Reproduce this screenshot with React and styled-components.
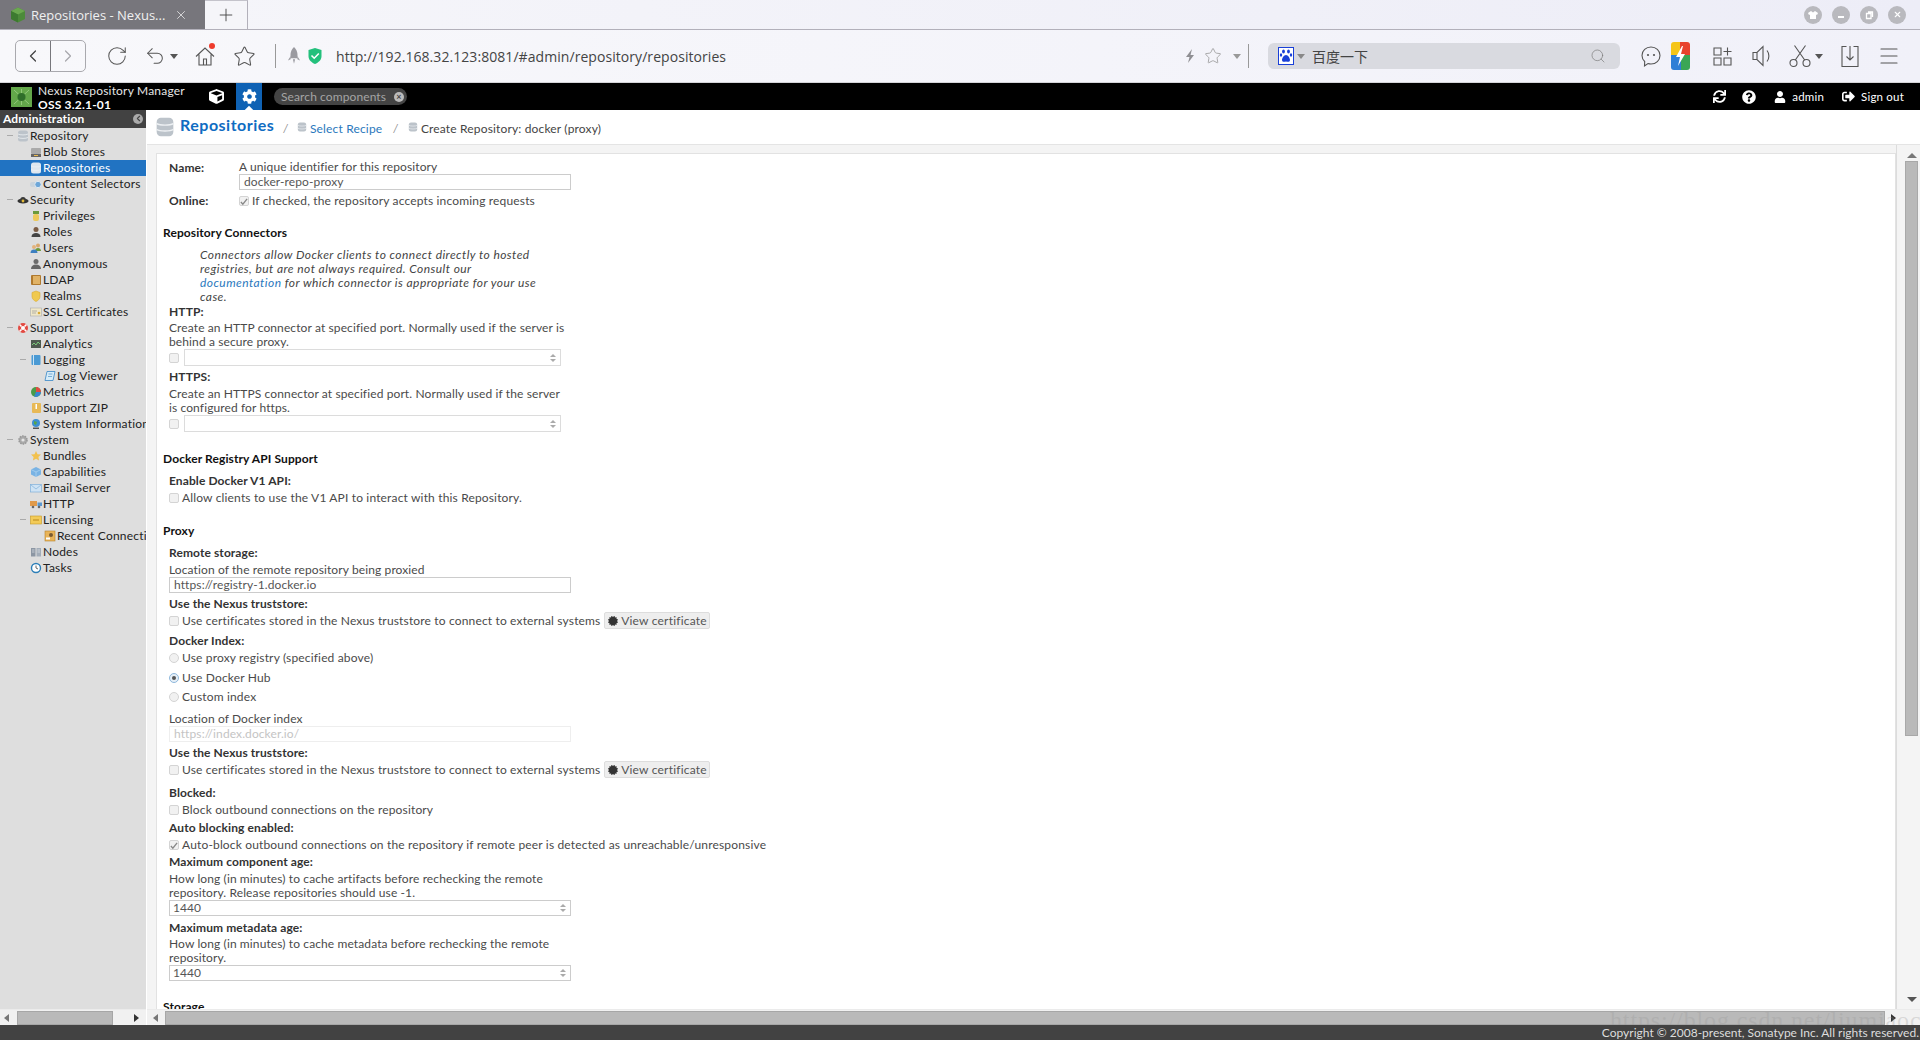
import React from 'react';
import styled, { createGlobalStyle } from 'styled-components';
import { FaCube, FaCog, FaSync, FaQuestionCircle, FaUser, FaSignOutAlt, FaCertificate } from 'react-icons/fa';
import { RotateCw, Undo2, Star, Search, Plus, X, ChevronLeft, ChevronRight, Menu } from 'lucide-react';

const Global = createGlobalStyle`
  html, body { margin: 0; padding: 0; height: 100%; overflow: hidden; background: #fff; }
  * { box-sizing: border-box; }
  body { font-family: Lato, "Open Sans", sans-serif; font-size: 12px; color: #333; }
`;

const Page = styled.div`position: relative; width: 1920px; height: 1040px; display: flex; flex-direction: column; overflow: hidden;`;

/* browser chrome */
const TabBar = styled.div`height: 30px; display: flex; background: linear-gradient(90deg, #f6f6fa, #ededf7); border-bottom: 1px solid #b2b0ba;`;
const ActiveTab = styled.div`width: 205px; height: 29px; background: #77767c; display: flex; align-items: center; padding-left: 10px; color: #f0f0f0; font: 13px "Open Sans", sans-serif;`;
const TabTitle = styled.span`margin-left: 5px; width: 143px; white-space: nowrap;`;
const NewTab = styled.div`width: 43px; height: 29px; display: flex; align-items: center; justify-content: center; background: #f5f5f9; border-right: 1px solid #b2b0ba; border-top: 1px solid #c4c3cb; color: #444;`;
const WindowButtons = styled.div`margin-left: auto; padding-right: 14px; display: flex; gap: 10px; align-items: center;`;
const WinButton = styled.div`width: 18px; height: 18px; border-radius: 50%; background: #b9b9be; display: flex; align-items: center; justify-content: center;`;

const Toolbar = styled.div`height: 53px; display: flex; align-items: center; padding-left: 15px; background: linear-gradient(90deg, #f8f8fb, #f1f1f9); border-bottom: 1px solid #d4d4d8;`;
const NavGroup = styled.div`width: 71px; height: 32px; border: 1px solid #a9a9ae; border-radius: 5px; display: flex; overflow: hidden;`;
const NavButton = styled.div`flex: 1; display: flex; align-items: center; justify-content: center; color: ${p => p.$off ? '#a8a8ac' : '#444'}; & + & { border-left: 1px solid #77777c; }`;
const Slot = styled.div`width: ${p => p.$w}px; margin-left: ${p => p.$ml || 0}px; height: 30px; flex: none; position: relative; display: flex; align-items: center; justify-content: center; color: ${p => p.$c || '#555'};`;
const Caret = styled.div`width: 0; height: 0; border-left: 4px solid transparent; border-right: 4px solid transparent; border-top: 5px solid ${p => p.$c || '#555'};`;
const Divider = styled.div`width: 1px; height: 24px; background: #999; margin-left: ${p => p.$ml}px; flex: none;`;
const Url = styled.div`margin-left: 11px; font: 14px "Open Sans", sans-serif; letter-spacing: .06px; color: #444; white-space: nowrap;`;
const RightTools = styled.div`margin-left: auto; display: flex; align-items: center; padding-right: 16px;`;
const SearchBox = styled.div`width: 352px; height: 26px; margin-left: 19px; border-radius: 6px; background: #d9dae0; display: flex; align-items: center; padding-left: 10px; color: #444; font: 14px "Noto Sans CJK SC", sans-serif;`;
const SearchText = styled.span`margin-left: 7px; width: 278px;`;
const Dot = styled.span`position: absolute; top: 2px; left: 19px; width: 6px; height: 6px; border-radius: 50%; background: #ee3b2d;`;

/* nexus header */
const NexusBar = styled.div`height: 27px; background: #000; display: flex; align-items: center; padding-left: 11px; color: #fff;`;
const Brand = styled.div`width: 150px; margin-left: 6px; height: 27px; overflow: hidden; line-height: 14px; padding-top: 1px; white-space: nowrap; font-size: 12px; letter-spacing: .2px; color: #e6e6e6;`;
const BrandVersion = styled.div`font-weight: 700; color: #fff; margin-top: 0;`;
const BarIcon = styled.div`width: ${p => p.$w}px; margin-left: ${p => p.$ml || 0}px; height: 27px; flex: none; display: flex; align-items: center; justify-content: center; color: #fff;`;
const GearTab = styled(BarIcon)`background: #0f62b4; position: relative; overflow: hidden;
  &::after { content: ""; position: absolute; bottom: -3px; left: 10px; width: 6px; height: 6px; background: #fff; transform: rotate(45deg); }`;
const QuickSearch = styled.div`width: 133px; height: 17px; margin-left: 12px; border-radius: 9px; background: #444; color: #a4a4a4; font-size: 12px; letter-spacing: .1px; display: flex; align-items: center; justify-content: space-between; padding: 0 3px 0 7px;`;
const ClearDot = styled.span`width: 10px; height: 10px; border-radius: 50%; background: #bbb; color: #444; font-size: 9px; line-height: 10px; text-align: center; font-weight: 700;`;
const BarRight = styled.div`margin-left: auto; display: flex; align-items: center; padding-right: 16px; font-size: 11.5px;`;
const BarText = styled.span`margin-left: ${p => p.$ml || 0}px; color: #fff; letter-spacing: .2px;`;

/* body */
const Body = styled.div`flex: 1; min-height: 0; display: flex;`;
const Sidebar = styled.div`width: 146px; flex: none; display: flex; flex-direction: column; background: #dedede;`;
const SideHead = styled.div`height: 18px; background: #424242; color: #fff; font-weight: 700; font-size: 12px; letter-spacing: .15px; display: flex; align-items: center; justify-content: space-between; padding: 0 3px 1px 3px;`;
const Collapse = styled.span`width: 10px; height: 10px; border-radius: 50%; background: #aaa; color: #444; display: flex; align-items: center; justify-content: center;`;
const Tree = styled.div`flex: 1; min-height: 0; overflow: hidden;`;
const Row = styled.div`height: 16px; display: flex; align-items: center; white-space: nowrap; overflow: hidden; padding-left: ${p => p.$indent}px; padding-bottom: 2px; background: ${p => p.$sel ? '#2173c2' : 'transparent'}; color: ${p => p.$sel ? '#fff' : '#222'}; letter-spacing: .2px;`;
const Toggle = styled.span`width: 6px; height: 1px; background: #aaa; flex: none; margin-right: 5px;`;
const RowIcon = styled.span`width: 12px; height: 12px; flex: none; margin: 2px 1px 0 -1px; display: flex; align-items: center; justify-content: center;`;
const HScroll = styled.div`height: 16px; background: #f1f1f1; display: flex; align-items: center; flex: none; border-top: 1px solid #ebebeb;`;
const Arrow = styled.span`width: 0; height: 0; flex: none; margin-left: ${p => p.$ml || 0}px;
  border-top: 4px solid transparent; border-bottom: 4px solid transparent;
  ${p => p.$left ? 'border-right: 5px solid #777;' : 'border-left: 5px solid #333;'}`;
const Thumb = styled.div`height: 14px; width: ${p => p.$w}px; flex: none; margin-left: ${p => p.$ml || 0}px; background: #b9b9b9; border: 1px solid #a6a6a6;`;

const Main = styled.div`flex: 1; min-width: 0; display: flex; flex-direction: column; margin-left: 1px;`;
const Crumbs = styled.div`height: 35px; flex: none; border-bottom: 1px solid #e4e4e4; display: flex; align-items: center; padding-left: 8px; background: #fff;`;
const CrumbTitle = styled.span`font-size: 16px; font-weight: 700; color: #0f6cc2; margin-left: 5px; position: relative; top: -3px; letter-spacing: .5px;`;
const CrumbSep = styled.span`color: #888; font-style: italic; margin: 0 ${p => p.$r}px 0 ${p => p.$l}px; font-size: 11px;`;
const Crumb = styled.span`color: ${p => p.$link ? '#2a78bd' : '#444'}; margin-left: 3px; font-size: 12px; letter-spacing: .16px; position: relative; top: 1px;`;

const Stage = styled.div`flex: 1; min-height: 0; display: flex;`;
const Gutter = styled.div`flex: 1; min-width: 0; background: #f4f4f4; padding: 8px 0 0 9px;`;
const Panel = styled.div`height: 100%; background: #fff; border: 1px solid #e2e2e2; border-bottom: 0; overflow: hidden; padding: 6px 0 0 6px;`;
const VScroll = styled.div`width: 24px; flex: none; background: #f4f4f4; display: flex; flex-direction: column; align-items: center; border-left: 1px solid #dcdcdc; padding: 8px 0 0 6px;`;
const VArrow = styled.span`width: 0; height: 0; border-left: 5px solid transparent; border-right: 5px solid transparent;
  ${p => p.$up ? 'border-bottom: 5px solid #777;' : 'border-top: 5px solid #555; margin-top: auto; margin-bottom: 7px;'}`;
const VThumb = styled.div`width: 13px; height: 575px; margin-top: 3px; background: #b9b9b9; border: 1px solid #a8a8a8;`;

/* form */
const Section = styled.div`font-weight: 700; color: #111; line-height: 14px; margin-top: ${p => p.$mt}px; letter-spacing: .1px;`;
const Field = styled.div`padding-left: 6px; margin-top: ${p => p.$mt || 0}px;`;
const Label = styled.div`font-weight: 700; color: #333; line-height: 14px; letter-spacing: .1px; margin-top: ${p => p.$mt || 0}px;`;
const Help = styled.div`line-height: 14px; color: #4a4a4a; white-space: nowrap; margin-top: ${p => p.$mt || 0}px; letter-spacing: .11px;`;
const NameGrid = styled.div`display: grid; grid-template-columns: 70px 332px; padding-left: 6px; margin-top: ${p => p.$mt || 0}px;`;
const Italic = styled.div`margin: ${p => p.$mt}px 0 0 37px; line-height: 14px; font-style: italic; color: #444; white-space: nowrap; letter-spacing: .44px;`;
const DocLink = styled.span`color: #2a78bd;`;
const Input = styled.div`height: 16px; width: ${p => p.$w || 402}px; border: 1px solid ${p => p.$off ? '#eee' : '#ccc'}; display: flex; align-items: center; padding-left: 4px; color: ${p => p.$off ? '#c4c4c4' : '#555'}; line-height: 14px; letter-spacing: .1px;`;
const NumberInput = styled.div`height: ${p => p.$h || 16}px; width: ${p => p.$w || 402}px; flex: none; margin-left: ${p => p.$ml || 0}px; border: 1px solid ${p => p.$h ? '#dcdcdc' : '#ccc'}; display: flex; align-items: center; justify-content: space-between; padding: 0 4px 0 3px; color: #555; line-height: 14px;`;
const Spinner = styled.span`display: flex; flex-direction: column; gap: 2px; &::before, &::after { content: ""; width: 0; height: 0; border-left: 3px solid transparent; border-right: 3px solid transparent; } &::before { border-bottom: 3px solid #aaa; } &::after { border-top: 3px solid #aaa; }`;
const CheckRow = styled.div`display: flex; align-items: center; height: 14px; padding-bottom: 2px; color: #4a4a4a; white-space: nowrap; letter-spacing: .16px; margin-top: ${p => p.$mt || 0}px;`;
const Box = styled.span`width: 10px; height: 10px; flex: none; margin: 2px 3px 0 0; border: 1px solid #d4d4d4; border-radius: 2px; background: #f1f1f1; display: flex; align-items: center; justify-content: center;`;
const Radio = styled(Box)`border-radius: 50%; ${p => p.$on && 'border-color: #8fb8dc; background: #e6eff7;'}`;
const RadioDot = styled.span`width: 4px; height: 4px; border-radius: 50%; background: #555;`;
const PortRow = styled.div`display: flex; align-items: center; height: 17px;`;
const PortBox = styled(Box)`margin: 0 5px 0 0;`;
const CertButton = styled.div`height: 17px; width: 106px; margin: 1px 0 0 4px; flex: none; background: #eee; border: 1px solid #ddd; border-radius: 2px; display: flex; align-items: center; justify-content: center; gap: 3px; color: #555; letter-spacing: .2px;`;

const Footer = styled.div`height: 15px; flex: none; background: #424242; color: #ddd; font-size: 12px; text-align: right; padding-right: 1px; line-height: 15px;`;
const Watermark = styled.div`position: absolute; left: 1610px; top: 1007px; height: 18px; overflow: hidden; font: 24px/27px "Liberation Serif", serif; color: rgba(150,150,150,.28); letter-spacing: .87px; white-space: nowrap; pointer-events: none;`;

/* small drawings */
const Svg = ({ s = 12, v = '0 0 12 12', children }) => <svg width={s} height={s} viewBox={v} style={{ display: 'block' }}>{children}</svg>;
const Db = ({ s = 12, c = '#bcc3ca' }) => (
  <Svg s={s}>
    <rect x="1" y=".5" width="10" height="11" rx="2.500" fill={c} />
    <path d="M1 4c2 1.200 8 1.200 10 0M1 7.500c2 1.200 8 1.200 10 0" stroke="#eef1f4" strokeWidth=".8" fill="none" />
  </Svg>
);
const icons = {
  db: <Db />,
  blob: <Svg><rect x="1" y="2" width="10" height="6" rx="1" fill="#aaa" /><rect x="1" y="8" width="10" height="3" fill="#666" /><rect x="4" y="9" width="4" height="1" fill="#e9b94c" /></Svg>,
  dbw: <Db c="#dfe7ef" />,
  sel: <Svg><rect x="0" y="4" width="7" height="5" rx="2" fill="#c9d3dc" /><circle cx="8" cy="6.500" r="3.200" fill="#6da6d8" stroke="#dfe9f2" /></Svg>,
  sec: <Svg><ellipse cx="6" cy="7" rx="5.500" ry="2.500" fill="#333" /><path d="M3 7a3 4 0 0 1 6 0z" fill="#3a3a3a" /><circle cx="6" cy="7" r="1.400" fill="#e0b93a" /></Svg>,
  priv: <Svg><rect x="3" y="1" width="6" height="3" fill="#6a9a3c" /><rect x="3" y="4" width="6" height="7" rx="2" fill="#ecc95a" /></Svg>,
  roles: <Svg><circle cx="6" cy="3.500" r="2.500" fill="#7b5c44" /><path d="M1.500 11c0-3 2-4 4.500-4s4.500 1 4.500 4z" fill="#444" /></Svg>,
  users: <Svg><circle cx="8" cy="3.500" r="2" fill="#d9a76c" /><path d="M5 9c0-2 1.500-3 3-3s3 1 3 3z" fill="#6b9a3a" /><circle cx="4" cy="5" r="2" fill="#e3b37c" /><path d="M.5 11c0-2.500 1.500-3.500 3.500-3.500S7.500 8.500 7.500 11z" fill="#3d7fc0" /></Svg>,
  anon: <Svg><circle cx="6" cy="3.500" r="2.500" fill="#6c6c6c" /><path d="M1 11c0-3 2-4.500 5-4.500s5 1.500 5 4.500z" fill="#666" /></Svg>,
  ldap: <Svg><rect x="1" y="1" width="10" height="10" rx="1" fill="#b07a2f" /><rect x="3" y="2" width="7" height="8" fill="#e1b366" /></Svg>,
  realm: <Svg><path d="M6 1l4 1.500v4C10 9 8 10.500 6 11.500 4 10.500 2 9 2 6.500v-4z" fill="#f0c94e" stroke="#d9a933" strokeWidth=".6" /></Svg>,
  ssl: <Svg><rect x=".5" y="2" width="11" height="8" fill="#efe7c8" stroke="#aaa" strokeWidth=".6" /><path d="M2 5h5M2 7h4" stroke="#999" strokeWidth=".7" /><circle cx="9" cy="7" r="1.300" fill="#d9a933" /></Svg>,
  support: <Svg><circle cx="6" cy="6" r="5" fill="#e24a42" /><circle cx="6" cy="6" r="2" fill="#fff" /><path d="M2.500 2.500l2 2M9.500 2.500l-2 2M2.500 9.500l2-2M9.500 9.500l-2-2" stroke="#fff" strokeWidth="1.600" /></Svg>,
  analytics: <Svg><rect x="1" y="2" width="10" height="8" fill="#4e5a50" /><path d="M2 7l2-2 2 2 2-3 2 2" stroke="#7fd67f" strokeWidth=".9" fill="none" /></Svg>,
  logging: <Svg><rect x="1.500" y="1" width="9" height="10" rx="1" fill="#4a9ad4" /><rect x="3" y="1" width="1" height="10" fill="#cde4f5" /></Svg>,
  log: <Svg><path d="M3 1.500h8L9 10.500H1z" fill="#d7ecf8" stroke="#4a90c9" strokeWidth=".9" /><path d="M4.500 4h4M4 6.500h4" stroke="#4a90c9" strokeWidth=".7" /></Svg>,
  metrics: <Svg><circle cx="6" cy="6" r="5" fill="#4a9b4a" /><path d="M6 6V1a5 5 0 0 1 5 5z" fill="#e24a42" /><path d="M6 6h5a5 5 0 0 1-7 4.500z" fill="#3a86d0" /></Svg>,
  zip: <Svg><rect x="2" y="1" width="9" height="10" rx="1" fill="#e8b956" /><rect x="5.500" y="2" width="1.500" height="5" fill="#fff" /></Svg>,
  info: <Svg><circle cx="6" cy="5" r="4" fill="#3d8fd1" /><path d="M4 3l3 1-1 3-2-1z" fill="#58a648" /><rect x="3" y="9.500" width="6" height="1.500" fill="#555" /></Svg>,
  gear: <Svg><circle cx="6" cy="6" r="4" fill="#aaa" stroke="#999" strokeWidth="1.600" strokeDasharray="1.500 1" /><circle cx="6" cy="6" r="1.600" fill="#e5e5e5" /></Svg>,
  bundle: <Svg><path d="M6 1l1.500 3.200 3.500.4-2.600 2.300.7 3.500L6 8.700 2.900 10.400l.7-3.500L1 4.600l3.500-.4z" fill="#f2c14e" /></Svg>,
  cap: <Svg><path d="M6 1l5 2.500v5L6 11 1 8.500v-5z" fill="#79b3e4" /><path d="M1 3.500L6 6l5-2.500M6 6v5" stroke="#bcdcf4" strokeWidth=".6" fill="none" /></Svg>,
  mail: <Svg><rect x=".5" y="2.500" width="11" height="7.500" fill="#cfe3f4" stroke="#7fb0da" strokeWidth=".7" /><path d="M1 3l5 4 5-4" stroke="#7fb0da" strokeWidth=".7" fill="none" /></Svg>,
  http: <Svg><rect x="0" y="3" width="7" height="5" fill="#e09a4a" /><rect x="7.500" y="4.500" width="4.500" height="3.500" fill="#5a97cf" /><circle cx="3" cy="9" r="1.300" fill="#666" /><circle cx="9" cy="9" r="1.300" fill="#666" /></Svg>,
  lic: <Svg><rect x=".5" y="2" width="11" height="8" fill="#f3cb58" stroke="#c79a25" strokeWidth=".6" /><path d="M3 6h6" stroke="#b8871d" /></Svg>,
  conn: <Svg><rect x="1" y="1" width="10" height="10" fill="#e9b459" stroke="#b9822b" strokeWidth=".6" /><circle cx="7" cy="5" r="2" fill="#7a5a32" /><rect x="2" y="7.500" width="4" height="2" fill="#fff" /></Svg>,
  nodes: <Svg><rect x="1" y="2" width="4.500" height="8.500" fill="#8c96a3" /><rect x="6.500" y="2" width="4.500" height="8.500" fill="#a3adb9" /><path d="M2 4h2.500M2 6h2.500M7.500 4H10M7.500 6H10" stroke="#dfe5ea" strokeWidth=".7" /></Svg>,
  tasks: <Svg><circle cx="6" cy="6" r="4.500" fill="#fff" stroke="#2d7fb8" strokeWidth="1.400" /><path d="M6 3.500V6l2 1" stroke="#555" strokeWidth=".9" fill="none" /></Svg>,
};

const tree = [
  ['Repository', 0, 'db', 1], ['Blob Stores', 1, 'blob'], ['Repositories', 1, 'dbw', 0, 1], ['Content Selectors', 1, 'sel'],
  ['Security', 0, 'sec', 1], ['Privileges', 1, 'priv'], ['Roles', 1, 'roles'], ['Users', 1, 'users'], ['Anonymous', 1, 'anon'], ['LDAP', 1, 'ldap'], ['Realms', 1, 'realm'], ['SSL Certificates', 1, 'ssl'],
  ['Support', 0, 'support', 1], ['Analytics', 1, 'analytics'], ['Logging', 1, 'logging', 1], ['Log Viewer', 2, 'log'], ['Metrics', 1, 'metrics'], ['Support ZIP', 1, 'zip'], ['System Information', 1, 'info'],
  ['System', 0, 'gear', 1], ['Bundles', 1, 'bundle'], ['Capabilities', 1, 'cap'], ['Email Server', 1, 'mail'], ['HTTP', 1, 'http'], ['Licensing', 1, 'lic', 1], ['Recent Connections', 2, 'conn'], ['Nodes', 1, 'nodes'], ['Tasks', 1, 'tasks'],
];
const indentFor = (level, toggle) => {
  if (level === 0) return 7;
  if (level === 2) return 45;
  return toggle ? 20 : 31;
};

const Cube = () => (
  <Svg s={16} v="0 0 16 16">
    <path d="M8 .5l7 3.500v8L8 15.500 1 12V4z" fill="#4c8a3a" />
    <path d="M8 .5l7 3.500L8 7.500 1 4z" fill="#6aa84f" />
    <path d="M8 7.500v8L1 12V4z" fill="#3d7a30" />
  </Svg>
);
const NexusLogo = () => (
  <svg width="21" height="20" viewBox="0 0 21 20" style={{ display: 'block' }}>
    <rect width="21" height="20" fill="#63a74a" />
    <path d="M10.500 10L3 3M10.500 10L18 3M10.500 10L3 17M10.500 10L18 17M10.500 10V2M10.500 10V18" stroke="#a6d68f" strokeWidth=".7" />
    <circle cx="10.500" cy="10" r="4" fill="#2f6e2a" />
  </svg>
);

const line = { fill: 'none', stroke: '#555', strokeWidth: 1.100 };
const Home = () => (
  <Svg s={24} v="0 0 24 24"><path d="M3 12.500L12 4l9 8.500M6 10.500V21h12V10.500M10.500 21v-6h3v6" {...line} /></Svg>
);
const Rocket = () => (
  <Svg s={20} v="0 0 18 18"><path d="M9 1c3 3 3.500 6 3 10H6C5.500 7 6 4 9 1z" fill="#9a9aa0" /><path d="M6 9l-2.500 4L6 12zM12 9l2.500 4L12 12zM8 12h2l-1 4z" fill="#9a9aa0" /></Svg>
);
const Shield = () => (
  <Svg s={18} v="0 0 18 18"><path d="M9 1l6.500 2v6c0 4-3 6.500-6.500 8C5.500 15.500 2.500 13 2.500 9V3z" fill="#23c07c" /><path d="M5.500 8.500L8.200 11.200 12.800 6.500" stroke="#fff" strokeWidth="1.600" fill="none" /></Svg>
);
const Bolt = () => (
  <Svg s={16} v="0 0 16 16"><path d="M10 1L4 9h3.500L6 15l6-8H8.500z" fill="#8f8f93" /></Svg>
);
const Paw = () => (
  <svg width="16" height="18" viewBox="0 0 16 18" style={{ display: 'block' }}>
    <rect x=".5" y=".5" width="15" height="17" fill="#fff" stroke="#1a40d8" />
    <ellipse cx="5.500" cy="4.500" rx="1.400" ry="2" fill="#1a40d8" /><ellipse cx="10.500" cy="4.500" rx="1.400" ry="2" fill="#1a40d8" />
    <ellipse cx="3" cy="8" rx="1.200" ry="1.700" fill="#1a40d8" /><ellipse cx="13" cy="8" rx="1.200" ry="1.700" fill="#1a40d8" />
    <path d="M8 8c2 0 4 3 4 5 0 2-2 2-4 1.500C6 15 4 15 4 13c0-2 2-5 4-5z" fill="#1a40d8" />
  </svg>
);
const Chat = () => (
  <Svg s={24} v="0 0 24 24"><path d="M12 3c5 0 9 3.500 9 8.500S17 20 12 20c-1 0-2-.2-3-.5L5.500 22l.2-4.500C4 16 3 14 3 11.500 3 6.500 7 3 12 3z" {...line} /><circle cx="9" cy="11" r="1.100" fill="#555" /><circle cx="15" cy="11" r="1.100" fill="#555" /></Svg>
);
const Lightning = () => (
  <svg width="19" height="28" viewBox="0 0 19 28" style={{ display: 'block' }}>
    <path d="M3 0h6v13H0V3a3 3 0 0 1 3-3z" fill="#f5c518" /><path d="M9 0h7a3 3 0 0 1 3 3v10H9z" fill="#e8432e" />
    <path d="M0 13h10v15H3a3 3 0 0 1-3-3z" fill="#2e7fd6" /><path d="M10 13h9v12a3 3 0 0 1-3 3h-6z" fill="#3aa655" />
    <path d="M11 4L5 15h4l-2 9 7-12h-4l2-8z" fill="#fff" />
  </svg>
);
const GridPlus = () => (
  <Svg s={20} v="0 0 20 20"><path d="M2 2h7v7H2zM2 12h7v7H2zM12 12h7v7h-7zM15.500 1.500v8M11.500 5.500h8" {...line} /></Svg>
);
const Speaker = () => (
  <Svg s={26} v="0 0 26 26"><path d="M4 9.500h4L14 3.500v19l-6-6H4zM8 9.500v7M18 7.500c2.500 3 2.500 8 0 11" {...line} /></Svg>
);
const Shears = () => (
  <Svg s={26} v="0 0 26 26"><circle cx="6.500" cy="20" r="3.500" {...line} /><circle cx="19.500" cy="20" r="3.500" {...line} /><path d="M8.300 17L18.500 2.500M17.700 17L7.500 2.500" {...line} /></Svg>
);
const Download = () => (
  <Svg s={24} v="0 0 24 24"><path d="M8.500 2.500H4v20h16v-20h-4.500M12 2v14M8.500 12.500l3.500 3.500 3.500-3.500" {...line} /></Svg>
);
const Tee = () => (
  <Svg s={10} v="0 0 10 10"><path d="M3 1L0 3l1 2 1-.5V9h6V4.500L9 5l1-2-3-2-2 1.500z" fill="#fff" /></Svg>
);
const CheckMark = () => (
  <svg width="9" height="9" viewBox="0 0 9 9" style={{ display: 'block' }}><path d="M1 5l2.200 2.500L8 1.500" fill="none" stroke="#888" strokeWidth="1.500" /></svg>
);

export default function App() {
  return (
    <Page>
      <Global />
      <TabBar>
        <ActiveTab><Cube /><TabTitle>Repositories - Nexus...</TabTitle><X size={14} strokeWidth={1.300} /></ActiveTab>
        <NewTab><Plus size={20} strokeWidth={1.100} /></NewTab>
        <WindowButtons>
          <WinButton><Tee /></WinButton>
          <WinButton><svg width="8" height="8"><rect x="1" y="5" width="6" height="2" fill="#fff" /></svg></WinButton>
          <WinButton><svg width="10" height="10"><path d="M2.500 3.500h4.500v5H2.500zM4 2h4.500v5" fill="none" stroke="#fff" strokeWidth="1.300" /></svg></WinButton>
          <WinButton><X size={9} color="#fff" strokeWidth={3} /></WinButton>
        </WindowButtons>
      </TabBar>
      <Toolbar>
        <NavGroup>
          <NavButton><ChevronLeft size={20} strokeWidth={1.500} /></NavButton>
          <NavButton $off><ChevronRight size={20} strokeWidth={1.500} /></NavButton>
        </NavGroup>
        <Slot $w={34} $ml={14}><RotateCw size={22} strokeWidth={1.100} /></Slot>
        <Slot $w={30} $ml={6}><Undo2 size={22} strokeWidth={1.100} /></Slot>
        <Slot $w={8}><Caret /></Slot>
        <Slot $w={30} $ml={12}><Home /><Dot /></Slot>
        <Slot $w={30} $ml={9}><Star size={23} strokeWidth={1.100} /></Slot>
        <Divider $ml={16} />
        <Slot $w={20} $ml={8}><Rocket /></Slot>
        <Slot $w={20} $ml={1}><Shield /></Slot>
        <Url>http://192.168.32.123:8081/#admin/repository/repositories</Url>
        <RightTools>
          <Slot $w={20}><Bolt /></Slot>
          <Slot $w={20} $ml={3} $c="#999"><Star size={18} strokeWidth={1.100} /></Slot>
          <Slot $w={8} $ml={10}><Caret $c="#999" /></Slot>
          <Divider $ml={7} />
          <SearchBox>
            <Paw />
            <Slot $w={8} $ml={3}><Caret $c="#888" /></Slot>
            <SearchText>百度一下</SearchText>
            <Search size={16} strokeWidth={1} color="#777" />
          </SearchBox>
          <Slot $w={30} $ml={16}><Chat /></Slot>
          <Slot $w={28}><Lightning /></Slot>
          <Slot $w={30} $ml={13}><GridPlus /></Slot>
          <Slot $w={30} $ml={10}><Speaker /></Slot>
          <Slot $w={30} $ml={8}><Shears /></Slot>
          <Slot $w={8}><Caret /></Slot>
          <Slot $w={30} $ml={12}><Download /></Slot>
          <Slot $w={30} $ml={9}><Menu size={24} strokeWidth={1.100} /></Slot>
        </RightTools>
      </Toolbar>
      <NexusBar>
        <NexusLogo />
        <Brand>Nexus Repository Manager<BrandVersion>OSS 3.2.1-01</BrandVersion></Brand>
        <BarIcon $w={32} $ml={12}><FaCube size={15} /></BarIcon>
        <GearTab $w={26} $ml={4}><FaCog size={15} /></GearTab>
        <QuickSearch>Search components<ClearDot>×</ClearDot></QuickSearch>
        <BarRight>
          <BarIcon $w={16}><FaSync size={13} /></BarIcon>
          <BarIcon $w={16} $ml={14}><FaQuestionCircle size={14} /></BarIcon>
          <BarIcon $w={16} $ml={15}><FaUser size={12} /></BarIcon>
          <BarText $ml={4}>admin</BarText>
          <BarIcon $w={16} $ml={16}><FaSignOutAlt size={13} /></BarIcon>
          <BarText $ml={5}>Sign out</BarText>
        </BarRight>
      </NexusBar>
      <Body>
        <Sidebar>
          <SideHead>Administration<Collapse><ChevronLeft size={9} strokeWidth={3} /></Collapse></SideHead>
          <Tree>
            {tree.map(([name, level, icon, toggle, sel]) => (
              <Row key={name} $indent={indentFor(level, toggle)} $sel={sel}>
                {toggle && level < 2 ? <Toggle /> : null}
                <RowIcon>{icons[icon]}</RowIcon>
                {name}
              </Row>
            ))}
          </Tree>
          <HScroll><Arrow $left $ml={4} /><Thumb $w={96} $ml={8} /><Arrow $ml={21} /></HScroll>
        </Sidebar>
        <Main>
          <Crumbs>
            <Db s={20} />
            <CrumbTitle>Repositories</CrumbTitle>
            <CrumbSep $l={9} $r={9}>/</CrumbSep>
            <Db s={10} /><Crumb $link>Select Recipe</Crumb>
            <CrumbSep $l={11} $r={10}>/</CrumbSep>
            <Db s={10} /><Crumb>Create Repository: docker (proxy)</Crumb>
          </Crumbs>
          <Stage>
            <Gutter>
              <Panel>
                <NameGrid>
                  <Label $mt={1}>Name:</Label>
                  <div>
                    <Help>A unique identifier for this repository</Help>
                    <Input $w={332}>docker-repo-proxy</Input>
                  </div>
                </NameGrid>
                <NameGrid $mt={4}>
                  <Label>Online:</Label>
                  <CheckRow><Box><CheckMark /></Box>If checked, the repository accepts incoming requests</CheckRow>
                </NameGrid>

                <Section $mt={18}>Repository Connectors</Section>
                <Italic $mt={8}>
                  Connectors allow Docker clients to connect directly to hosted<br />
                  registries, but are not always required. Consult our<br />
                  <DocLink>documentation</DocLink> for which connector is appropriate for your use<br />
                  case.
                </Italic>
                <Field $mt={1}>
                  <Label>HTTP:</Label>
                  <Help $mt={2}>Create an HTTP connector at specified port. Normally used if the server is<br />behind a secure proxy.</Help>
                  <PortRow><PortBox /><NumberInput $w={377} $h={17}><span /><Spinner /></NumberInput></PortRow>
                  <Label $mt={4}>HTTPS:</Label>
                  <Help $mt={3}>Create an HTTPS connector at specified port. Normally used if the server<br />is configured for https.</Help>
                  <PortRow><PortBox /><NumberInput $w={377} $h={17}><span /><Spinner /></NumberInput></PortRow>
                </Field>

                <Section $mt={20}>Docker Registry API Support</Section>
                <Field $mt={8}>
                  <Label>Enable Docker V1 API:</Label>
                  <CheckRow $mt={3}><Box />Allow clients to use the V1 API to interact with this Repository.</CheckRow>
                </Field>

                <Section $mt={19}>Proxy</Section>
                <Field $mt={8}>
                  <Label>Remote storage:</Label>
                  <Help $mt={3}>Location of the remote repository being proxied</Help>
                  <Input>https://registry-1.docker.io</Input>
                  <Label $mt={4}>Use the Nexus truststore:</Label>
                  <CheckRow $mt={3}><Box />Use certificates stored in the Nexus truststore to connect to external systems<CertButton><FaCertificate size={10} color="#333" />View certificate</CertButton></CheckRow>
                  <Label $mt={6}>Docker Index:</Label>
                  <CheckRow $mt={3}><Radio />Use proxy registry (specified above)</CheckRow>
                  <CheckRow $mt={6}><Radio $on><RadioDot /></Radio>Use Docker Hub</CheckRow>
                  <CheckRow $mt={5}><Radio />Custom index</CheckRow>
                  <Help $mt={8}>Location of Docker index</Help>
                  <Input $off>https://index.docker.io/</Input>
                  <Label $mt={4}>Use the Nexus truststore:</Label>
                  <CheckRow $mt={3}><Box />Use certificates stored in the Nexus truststore to connect to external systems<CertButton><FaCertificate size={10} color="#333" />View certificate</CertButton></CheckRow>
                  <Label $mt={9}>Blocked:</Label>
                  <CheckRow $mt={3}><Box />Block outbound connections on the repository</CheckRow>
                  <Label $mt={4}>Auto blocking enabled:</Label>
                  <CheckRow $mt={3}><Box><CheckMark /></Box>Auto-block outbound connections on the repository if remote peer is detected as unreachable/unresponsive</CheckRow>
                  <Label $mt={3}>Maximum component age:</Label>
                  <Help $mt={3}>How long (in minutes) to cache artifacts before rechecking the remote<br />repository. Release repositories should use -1.</Help>
                  <NumberInput>1440<Spinner /></NumberInput>
                  <Label $mt={5}>Maximum metadata age:</Label>
                  <Help $mt={2}>How long (in minutes) to cache metadata before rechecking the remote<br />repository.</Help>
                  <NumberInput>1440<Spinner /></NumberInput>
                </Field>
                <Section $mt={19}>Storage</Section>
              </Panel>
            </Gutter>
            <VScroll><VArrow $up /><VThumb /><VArrow /></VScroll>
          </Stage>
          <HScroll><Arrow $left $ml={6} /><Thumb $w={1720} $ml={7} /><Arrow $ml={6} /></HScroll>
        </Main>
      </Body>
      <Footer>Copyright © 2008-present, Sonatype Inc. All rights reserved.</Footer>
      <Watermark>https://blog.csdn.net/liumiaocn</Watermark>
    </Page>
  );
}
